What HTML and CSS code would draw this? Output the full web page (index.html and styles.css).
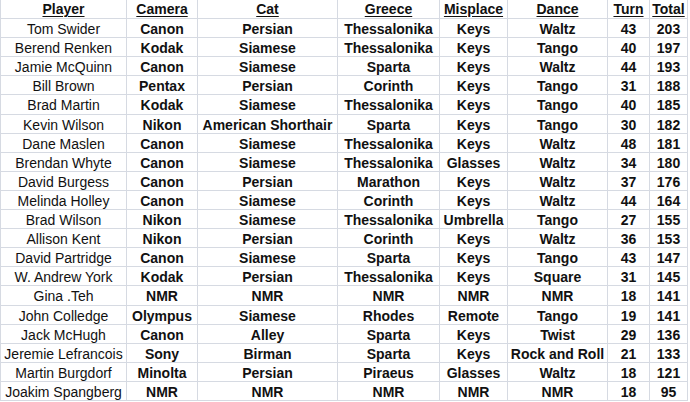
FILE: index.html
```html
<!DOCTYPE html>
<html>
<head>
<meta charset="utf-8">
<link rel="stylesheet" href="styles.css">
</head>
<body>
<div class="sheet">
  <div class="c h">Player</div><div class="c h">Camera</div><div class="c h">Cat</div><div class="c h">Greece</div><div class="c h">Misplace</div><div class="c h">Dance</div><div class="c h">Turn</div><div class="c h">Total</div>

  <div class="c n">Tom Swider</div><div class="c">Canon</div><div class="c">Persian</div><div class="c">Thessalonika</div><div class="c">Keys</div><div class="c">Waltz</div><div class="c">43</div><div class="c">203</div>
  <div class="c n">Berend Renken</div><div class="c">Kodak</div><div class="c">Siamese</div><div class="c">Thessalonika</div><div class="c">Keys</div><div class="c">Tango</div><div class="c">40</div><div class="c">197</div>
  <div class="c n">Jamie McQuinn</div><div class="c">Canon</div><div class="c">Siamese</div><div class="c">Sparta</div><div class="c">Keys</div><div class="c">Waltz</div><div class="c">44</div><div class="c">193</div>
  <div class="c n">Bill Brown</div><div class="c">Pentax</div><div class="c">Persian</div><div class="c">Corinth</div><div class="c">Keys</div><div class="c">Tango</div><div class="c">31</div><div class="c">188</div>
  <div class="c n">Brad Martin</div><div class="c">Kodak</div><div class="c">Siamese</div><div class="c">Thessalonika</div><div class="c">Keys</div><div class="c">Tango</div><div class="c">40</div><div class="c">185</div>
  <div class="c n">Kevin Wilson</div><div class="c">Nikon</div><div class="c">American Shorthair</div><div class="c">Sparta</div><div class="c">Keys</div><div class="c">Tango</div><div class="c">30</div><div class="c">182</div>
  <div class="c n">Dane Maslen</div><div class="c">Canon</div><div class="c">Siamese</div><div class="c">Thessalonika</div><div class="c">Keys</div><div class="c">Waltz</div><div class="c">48</div><div class="c">181</div>
  <div class="c n">Brendan Whyte</div><div class="c">Canon</div><div class="c">Siamese</div><div class="c">Thessalonika</div><div class="c">Glasses</div><div class="c">Waltz</div><div class="c">34</div><div class="c">180</div>
  <div class="c n">David Burgess</div><div class="c">Canon</div><div class="c">Persian</div><div class="c">Marathon</div><div class="c">Keys</div><div class="c">Waltz</div><div class="c">37</div><div class="c">176</div>
  <div class="c n">Melinda Holley</div><div class="c">Canon</div><div class="c">Siamese</div><div class="c">Corinth</div><div class="c">Keys</div><div class="c">Waltz</div><div class="c">44</div><div class="c">164</div>
  <div class="c n">Brad Wilson</div><div class="c">Nikon</div><div class="c">Siamese</div><div class="c">Thessalonika</div><div class="c">Umbrella</div><div class="c">Tango</div><div class="c">27</div><div class="c">155</div>
  <div class="c n">Allison Kent</div><div class="c">Nikon</div><div class="c">Persian</div><div class="c">Corinth</div><div class="c">Keys</div><div class="c">Waltz</div><div class="c">36</div><div class="c">153</div>
  <div class="c n">David Partridge</div><div class="c">Canon</div><div class="c">Siamese</div><div class="c">Sparta</div><div class="c">Keys</div><div class="c">Tango</div><div class="c">43</div><div class="c">147</div>
  <div class="c n">W. Andrew York</div><div class="c">Kodak</div><div class="c">Persian</div><div class="c">Thessalonika</div><div class="c">Keys</div><div class="c">Square</div><div class="c">31</div><div class="c">145</div>
  <div class="c n">Gina .Teh</div><div class="c">NMR</div><div class="c">NMR</div><div class="c">NMR</div><div class="c">NMR</div><div class="c">NMR</div><div class="c">18</div><div class="c">141</div>
  <div class="c n">John Colledge</div><div class="c">Olympus</div><div class="c">Siamese</div><div class="c">Rhodes</div><div class="c">Remote</div><div class="c">Tango</div><div class="c">19</div><div class="c">141</div>
  <div class="c n">Jack McHugh</div><div class="c">Canon</div><div class="c">Alley</div><div class="c">Sparta</div><div class="c">Keys</div><div class="c">Twist</div><div class="c">29</div><div class="c">136</div>
  <div class="c n">Jeremie Lefrancois</div><div class="c">Sony</div><div class="c">Birman</div><div class="c">Sparta</div><div class="c">Keys</div><div class="c">Rock and Roll</div><div class="c">21</div><div class="c">133</div>
  <div class="c n">Martin Burgdorf</div><div class="c">Minolta</div><div class="c">Persian</div><div class="c">Piraeus</div><div class="c">Glasses</div><div class="c">Waltz</div><div class="c">18</div><div class="c">121</div>
  <div class="c n">Joakim Spangberg</div><div class="c">NMR</div><div class="c">NMR</div><div class="c">NMR</div><div class="c">NMR</div><div class="c">NMR</div><div class="c">18</div><div class="c">95</div>
</div>
</body>
</html>
```
FILE: styles.css
```css
html, body {
  margin: 0;
  padding: 0;
  background: #ffffff;
}

.sheet {
  display: inline-grid;
  grid-template-columns: 125px 70px 139px 101px 67px 99px 41px 37px;
  grid-auto-rows: 18.1px;
  gap: 1px;
  background: #d6dae2;
  border-left: 1px solid #d6dae2;
  border-right: 1px solid #d6dae2;
  border-bottom: 1px solid #d6dae2;
  font-family: "Liberation Sans", Arial, sans-serif;
  font-size: 14px;
  color: #111111;
}

.c {
  background: #ffffff;
  text-align: center;
  white-space: nowrap;
  font-weight: bold;
  line-height: 18px;
  padding-top: 1px;
  height: 17.1px;
  overflow: visible;
}

.n {
  font-weight: normal;
}

.h {
  font-weight: bold;
  text-decoration: underline;
  text-underline-offset: 2px;
  padding-top: 0;
  height: 18.1px;
}
```
